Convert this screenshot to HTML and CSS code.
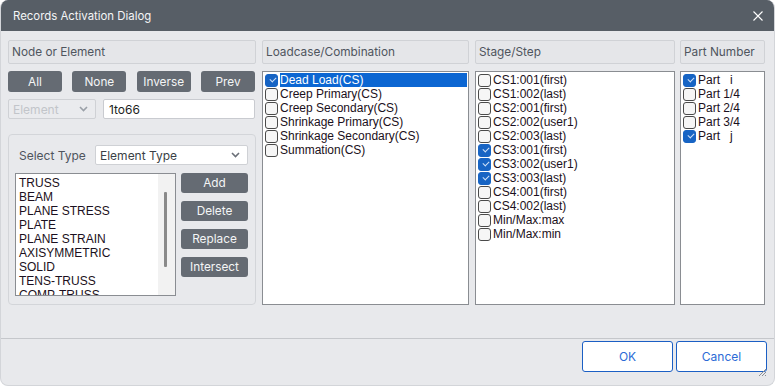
FILE: index.html
```html
<!DOCTYPE html>
<html>
<head>
<meta charset="utf-8">
<link rel="stylesheet" href="styles.css">
</head>
<body>
<div class="dialog">
  <div class="titlebar">
    <span class="title">Records Activation Dialog</span>
    <svg class="close" width="10" height="10" viewBox="0 0 10 10"><path d="M0.5 0.5 L9.5 9.5 M9.5 0.5 L0.5 9.5" stroke="#fff" stroke-width="1.1" fill="none"/></svg>
  </div>
  <div class="content">
    <div class="col col-node">
      <div class="col-header">Node or Element</div>
      <div class="btn-row">
        <button class="btn">All</button>
        <button class="btn">None</button>
        <button class="btn">Inverse</button>
        <button class="btn">Prev</button>
      </div>
      <div class="sel-row">
        <div class="select disabled"><span>Element</span><svg class="chev" width="9" height="6" viewBox="0 0 9 6"><path d="M1 1 L4.5 4.5 L8 1" stroke="#9aa0a8" stroke-width="1.6" fill="none"/></svg></div>
        <div class="textbox">1to66</div>
      </div>
      <div class="group">
        <div class="type-row">
          <span class="type-label">Select Type</span>
          <div class="select type-select"><span>Element Type</span><svg class="chev" width="9" height="6" viewBox="0 0 9 6"><path d="M1 1 L4.5 4.5 L8 1" stroke="#6b7078" stroke-width="1.6" fill="none"/></svg></div>
        </div>
        <div class="type-body">
          <div class="type-list">
            <div class="type-items">
              <div>TRUSS</div>
              <div>BEAM</div>
              <div>PLANE STRESS</div>
              <div>PLATE</div>
              <div>PLANE STRAIN</div>
              <div>AXISYMMETRIC</div>
              <div>SOLID</div>
              <div>TENS-TRUSS</div>
              <div>COMP-TRUSS</div>
            </div>
            <div class="scroll"><div class="thumb"></div></div>
          </div>
          <div class="type-btns">
            <button class="btn">Add</button>
            <button class="btn">Delete</button>
            <button class="btn">Replace</button>
            <button class="btn">Intersect</button>
          </div>
        </div>
      </div>
    </div>

    <div class="col col-load">
      <div class="col-header">Loadcase/Combination</div>
      <div class="checklist">
        <div class="item sel"><span class="cb on"></span><span class="lbl">Dead Load(CS)</span></div>
        <div class="item"><span class="cb"></span><span class="lbl">Creep Primary(CS)</span></div>
        <div class="item"><span class="cb"></span><span class="lbl">Creep Secondary(CS)</span></div>
        <div class="item"><span class="cb"></span><span class="lbl">Shrinkage Primary(CS)</span></div>
        <div class="item"><span class="cb"></span><span class="lbl">Shrinkage Secondary(CS)</span></div>
        <div class="item"><span class="cb"></span><span class="lbl">Summation(CS)</span></div>
      </div>
    </div>

    <div class="col col-stage">
      <div class="col-header">Stage/Step</div>
      <div class="checklist">
        <div class="item"><span class="cb"></span><span class="lbl">CS1:001(first)</span></div>
        <div class="item"><span class="cb"></span><span class="lbl">CS1:002(last)</span></div>
        <div class="item"><span class="cb"></span><span class="lbl">CS2:001(first)</span></div>
        <div class="item"><span class="cb"></span><span class="lbl">CS2:002(user1)</span></div>
        <div class="item"><span class="cb"></span><span class="lbl">CS2:003(last)</span></div>
        <div class="item"><span class="cb on"></span><span class="lbl">CS3:001(first)</span></div>
        <div class="item"><span class="cb on"></span><span class="lbl">CS3:002(user1)</span></div>
        <div class="item"><span class="cb on"></span><span class="lbl">CS3:003(last)</span></div>
        <div class="item"><span class="cb"></span><span class="lbl">CS4:001(first)</span></div>
        <div class="item"><span class="cb"></span><span class="lbl">CS4:002(last)</span></div>
        <div class="item"><span class="cb"></span><span class="lbl">Min/Max:max</span></div>
        <div class="item"><span class="cb"></span><span class="lbl">Min/Max:min</span></div>
      </div>
    </div>

    <div class="col col-part">
      <div class="col-header">Part Number</div>
      <div class="checklist">
        <div class="item"><span class="cb on"></span><span class="lbl">Part&nbsp;&nbsp;&nbsp;i</span></div>
        <div class="item"><span class="cb"></span><span class="lbl">Part 1/4</span></div>
        <div class="item"><span class="cb"></span><span class="lbl">Part 2/4</span></div>
        <div class="item"><span class="cb"></span><span class="lbl">Part 3/4</span></div>
        <div class="item"><span class="cb on"></span><span class="lbl">Part&nbsp;&nbsp;&nbsp;j</span></div>
      </div>
    </div>
  </div>
  <div class="footer">
    <button class="fbtn">OK</button>
    <button class="fbtn">Cancel</button>
    <svg class="grip" width="11" height="7" viewBox="0 0 11 7"><path d="M4 7 L11 0 M7 7 L11 3 M10 7 L11 6" stroke="#8a8e94" stroke-width="1" fill="none"/></svg>
  </div>
</div>
</body>
</html>
```

FILE: styles.css
```css
* { box-sizing: border-box; }
html, body { margin: 0; padding: 0; background: #ffffff; }
body { font-family: "Inter", "Liberation Sans", sans-serif; }

.dialog {
  width: 775px;
  height: 386px;
  background: #e8e9ec;
  border: 1px solid #d3d5d9;
  border-top: none;
  border-radius: 8px;
  overflow: hidden;
  display: flex;
  flex-direction: column;
  position: relative;
}

.titlebar {
  height: 31px;
  flex: none;
  background: #575e66;
  color: #f4f5f6;
  display: flex;
  align-items: center;
  justify-content: space-between;
  padding: 0 11px 0 12px;
  font-size: 11.4px;
}
.close { display: block; margin-top: 1px; }

.content {
  height: 275px;
  flex: none;
  display: flex;
  padding: 9px 0 0 7px;
}
.col { display: flex; flex-direction: column; }
.col-node { width: 248px; margin-right: 6px; }
.col-load { width: 207px; margin-right: 6px; }
.col-stage { width: 200px; margin-right: 5px; }
.col-part { width: 85px; }

.col-header {
  height: 24px;
  flex: none;
  border: 1px solid #d0d2d6;
  border-radius: 2px;
  background: #e5e6e9;
  color: #4f555e;
  font-size: 11.8px;
  display: flex;
  align-items: center;
  padding-left: 3px;
  white-space: nowrap;
}

.btn {
  font-family: "Inter", "Liberation Sans", sans-serif;
  background: #656b73;
  color: #f4f5f6;
  border: none;
  border-radius: 3px;
  font-size: 11.8px;
  padding: 0;
  margin: 0;
}

.btn-row {
  margin-top: 7px;
  height: 21px;
  display: flex;
  justify-content: space-between;
  padding-right: 1px;
}
.btn-row .btn { width: 54px; height: 21px; }

.sel-row {
  margin-top: 7px;
  height: 20px;
  display: flex;
  gap: 7px;
}
.select {
  height: 20px;
  border: 1px solid #cfd1d5;
  border-radius: 2px;
  background: #ffffff;
  display: flex;
  align-items: center;
  justify-content: space-between;
  padding: 0 7px 0 4px;
  font-size: 12px;
  color: #3a3f46;
}
.select.disabled {
  width: 88px;
  background: #eaebee;
  color: #c2c5ca;
}
.textbox {
  width: 152px;
  height: 20px;
  border: 1px solid #c9cbd0;
  border-radius: 2px;
  background: #ffffff;
  font-size: 12px;
  color: #1d1f23;
  display: flex;
  align-items: center;
  padding-left: 5px;
}

.group {
  margin-top: 15px;
  height: 171px;
  border: 1px solid #d3d5d9;
  border-radius: 4px;
  padding: 10px 7px 0 6px;
}
.type-row {
  display: flex;
  align-items: center;
  height: 20px;
}
.type-label {
  width: 80px;
  padding-left: 4px;
  font-size: 12px;
  color: #4f555e;
}
.type-select { width: 153px; }

.type-body {
  margin-top: 8px;
  display: flex;
  gap: 5px;
}
.type-list {
  width: 161px;
  height: 123px;
  border: 1px solid #8a8d92;
  background: #ffffff;
  display: flex;
  overflow: hidden;
}
.type-items {
  flex: 1;
  padding: 2px 0 0 3px;
  font-family: "Liberation Sans", "Arial", sans-serif;
  font-size: 12px;
  line-height: 14px;
  color: #1b1020;
}
.scroll {
  width: 17px;
  background: #f2f2f2;
  position: relative;
}
.thumb {
  position: absolute;
  left: 6px;
  top: 18px;
  width: 3px;
  height: 75px;
  background: #8a8a8a;
  border-radius: 1px;
}
.type-btns {
  display: flex;
  flex-direction: column;
  gap: 8px;
}
.type-btns .btn { width: 67px; height: 20px; }

.checklist {
  margin-top: 7px;
  height: 234px;
  border: 1px solid #8a8d92;
  background: #ffffff;
  padding: 1px 1px 0 2px;
  font-family: "Liberation Sans", "Arial", sans-serif;
  font-size: 12px;
  color: #1b1020;
}
.item {
  height: 14px;
  display: flex;
  align-items: center;
  white-space: nowrap;
}
.cb {
  width: 13px;
  height: 13px;
  flex: none;
  border: 1px solid #4a4a4a;
  border-radius: 3px;
  background: #f6f6f6;
  margin-right: 2px;
  position: relative;
}
.cb.on {
  background: #1764c4;
  border-color: #1764c4;
}
.cb.on::after {
  content: "";
  position: absolute;
  left: 3.5px;
  top: 2.5px;
  width: 5px;
  height: 3px;
  border-left: 1px solid #cfe0f7;
  border-bottom: 1px solid #cfe0f7;
  transform: rotate(-45deg);
}
.lbl { line-height: 14px; }
.item.sel .lbl {
  flex: 1;
  background: #0c66d2;
  color: #ffffff;
  margin-right: 0;
}

.footer {
  margin-top: 32px;
  border-top: 1px solid #c5c7cb;
  padding-top: 2px;
  display: flex;
  justify-content: flex-end;
  gap: 3px;
  padding-right: 7px;
}
.fbtn {
  width: 91px;
  height: 31px;
  background: #ffffff;
  border: 1px solid #1b5fc4;
  border-radius: 3px;
  color: #2b6bd6;
  font-family: "Inter", "Liberation Sans", sans-serif;
  font-size: 12px;
  padding: 0;
}
.grip {
  position: absolute;
  right: 8px;
  bottom: 9px;
}
```
